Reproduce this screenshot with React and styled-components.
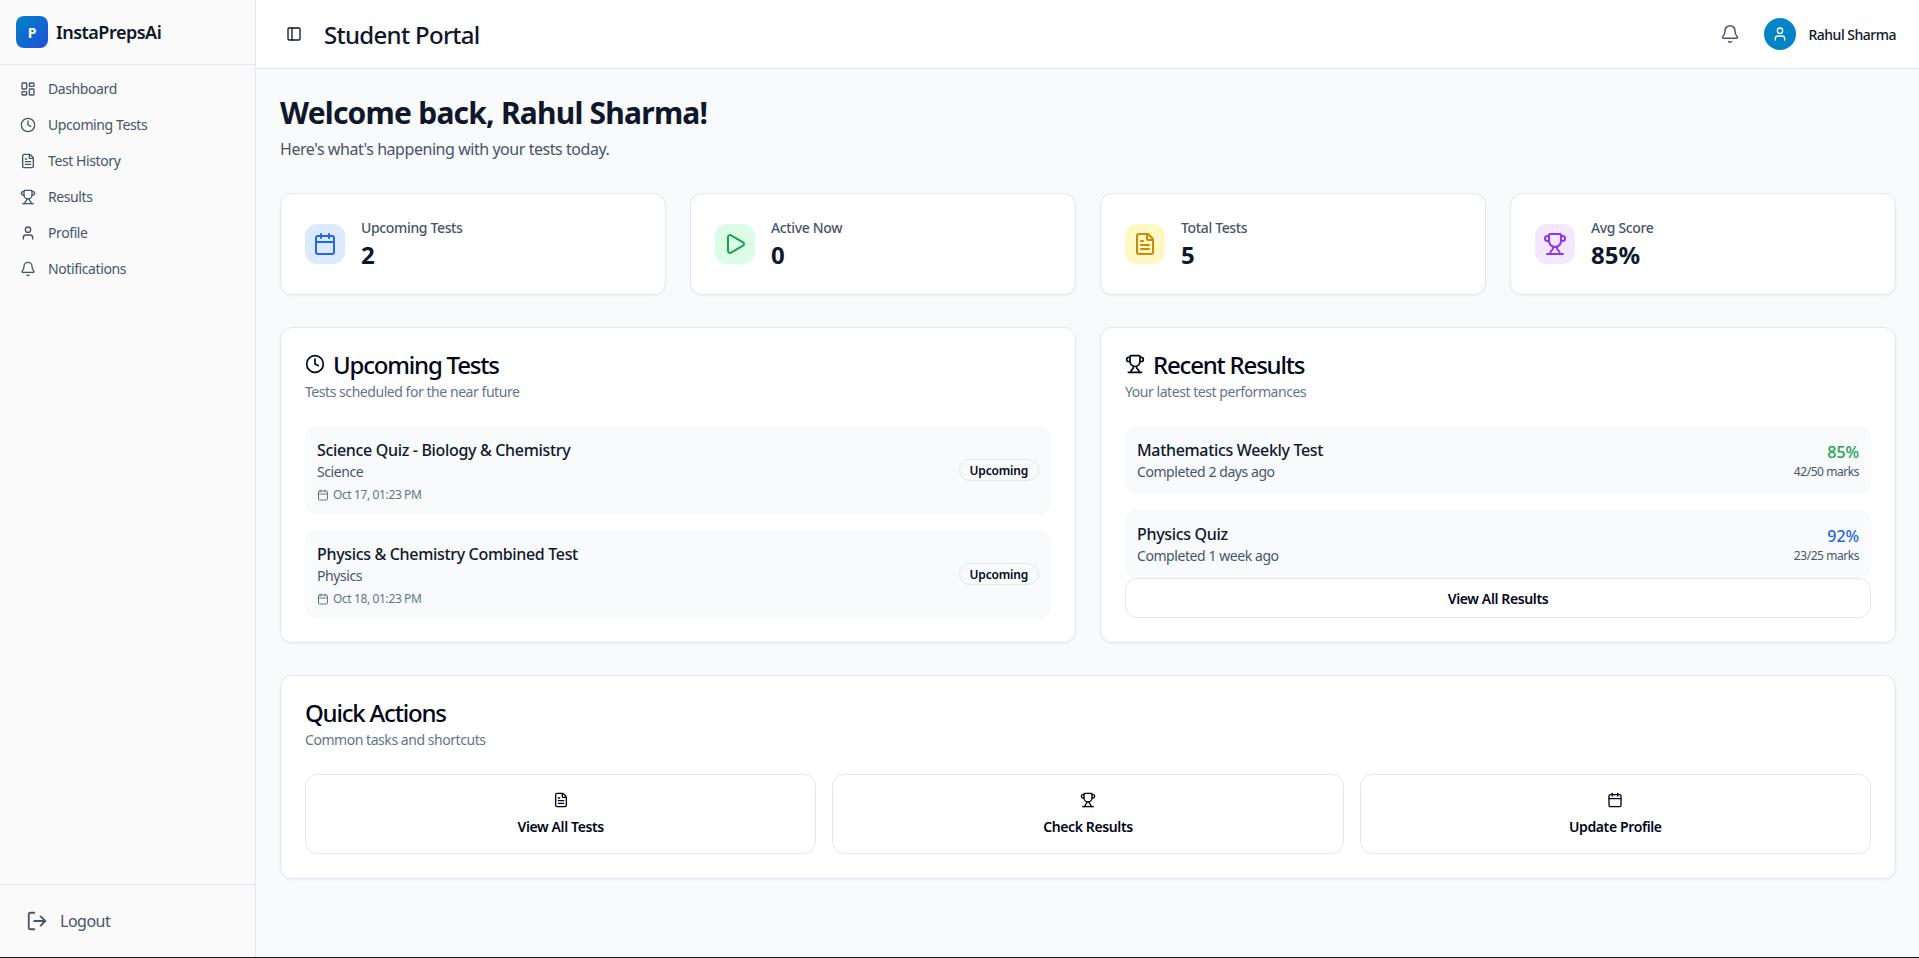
import { createGlobalStyle } from "styled-components";
import styled from "styled-components";
import {
  Bell,
  Calendar,
  Clock,
  FileText,
  LayoutDashboard,
  LogOut,
  PanelLeft,
  Play,
  Trophy,
  User,
} from "lucide-react";

const GlobalStyle = createGlobalStyle`
  html, body {
    margin: 0;
    padding: 0;
    height: 958px;
    overflow: hidden;
    background: #1a1a1a;
  }
  * {
    box-sizing: border-box;
  }
  body {
    font-family: "Noto Sans", Inter, sans-serif;
    color: #0f172a;
  }
`;

const navItems = [
  { label: "Dashboard", icon: LayoutDashboard },
  { label: "Upcoming Tests", icon: Clock },
  { label: "Test History", icon: FileText },
  { label: "Results", icon: Trophy },
  { label: "Profile", icon: User },
  { label: "Notifications", icon: Bell },
];

const stats = [
  { label: "Upcoming Tests", value: "2", icon: Calendar, bg: "#dbeafe", fg: "#2563eb" },
  { label: "Active Now", value: "0", icon: Play, bg: "#dcfce7", fg: "#16a34a" },
  { label: "Total Tests", value: "5", icon: FileText, bg: "#fef9c3", fg: "#ca8a04" },
  { label: "Avg Score", value: "85%", icon: Trophy, bg: "#f3e8ff", fg: "#9333ea" },
];

const upcoming = [
  { title: "Science Quiz - Biology & Chemistry", subject: "Science", date: "Oct 17, 01:23 PM" },
  { title: "Physics & Chemistry Combined Test", subject: "Physics", date: "Oct 18, 01:23 PM" },
];

const results = [
  { title: "Mathematics Weekly Test", when: "Completed 2 days ago", score: "85%", marks: "42/50 marks", color: "#16a34a" },
  { title: "Physics Quiz", when: "Completed 1 week ago", score: "92%", marks: "23/25 marks", color: "#2563eb" },
];

const actions = [
  { label: "View All Tests", icon: FileText },
  { label: "Check Results", icon: Trophy },
  { label: "Update Profile", icon: Calendar },
];

export default function App() {
  return (
    <>
      <GlobalStyle />
      <Shell>
        <Sidebar>
          <Brand>
            <LogoMark>P</LogoMark>
            <BrandName>InstaPrepsAi</BrandName>
          </Brand>
          <Nav>
            {navItems.map((item) => (
              <NavItem key={item.label}>
                <item.icon size={16} strokeWidth={2} />
                <NavLabel>{item.label}</NavLabel>
              </NavItem>
            ))}
          </Nav>
          <SidebarFooter>
            <LogoutButton>
              <LogOut size={22} strokeWidth={2} />
              Logout
            </LogoutButton>
          </SidebarFooter>
        </Sidebar>

        <Column>
          <TopBar>
            <TopLeft>
              <IconButton>
                <PanelLeft size={16} strokeWidth={2} />
              </IconButton>
              <PageTitle>Student Portal</PageTitle>
            </TopLeft>
            <TopRight>
              <BellButton>
                <Bell size={20} strokeWidth={1.75} />
              </BellButton>
              <UserChip>
                <Avatar>
                  <User size={16} strokeWidth={2} />
                </Avatar>
                <UserName>Rahul Sharma</UserName>
              </UserChip>
            </TopRight>
          </TopBar>

          <Main>
            <Welcome>Welcome back, Rahul Sharma!</Welcome>
            <WelcomeSub>Here's what's happening with your tests today.</WelcomeSub>

            <StatGrid>
              {stats.map((s) => (
                <StatCard key={s.label}>
                  <StatIcon $bg={s.bg} $fg={s.fg}>
                    <s.icon size={24} strokeWidth={2} />
                  </StatIcon>
                  <div>
                    <StatLabel>{s.label}</StatLabel>
                    <StatValue>{s.value}</StatValue>
                  </div>
                </StatCard>
              ))}
            </StatGrid>

            <TwoCol>
              <Card>
                <CardTitle>
                  <Clock size={20} strokeWidth={2} />
                  Upcoming Tests
                </CardTitle>
                <CardSub>Tests scheduled for the near future</CardSub>
                <ItemList>
                  {upcoming.map((t) => (
                    <TestItem key={t.title}>
                      <div>
                        <ItemTitle>{t.title}</ItemTitle>
                        <ItemMeta>{t.subject}</ItemMeta>
                        <ItemDate>
                          <Calendar size={12} strokeWidth={2} />
                          {t.date}
                        </ItemDate>
                      </div>
                      <Badge>Upcoming</Badge>
                    </TestItem>
                  ))}
                </ItemList>
              </Card>

              <Card>
                <CardTitle>
                  <Trophy size={20} strokeWidth={2} />
                  Recent Results
                </CardTitle>
                <CardSub>Your latest test performances</CardSub>
                <ItemList>
                  {results.map((r) => (
                    <TestItem key={r.title}>
                      <div>
                        <ItemTitle>{r.title}</ItemTitle>
                        <ItemMeta>{r.when}</ItemMeta>
                      </div>
                      <ScoreBox>
                        <Score $color={r.color}>{r.score}</Score>
                        <Marks>{r.marks}</Marks>
                      </ScoreBox>
                    </TestItem>
                  ))}
                </ItemList>
                <OutlineButton>View All Results</OutlineButton>
              </Card>
            </TwoCol>

            <QuickCard>
              <CardTitle>Quick Actions</CardTitle>
              <CardSub>Common tasks and shortcuts</CardSub>
              <ActionGrid>
                {actions.map((a) => (
                  <ActionButton key={a.label}>
                    <a.icon size={16} strokeWidth={2} />
                    {a.label}
                  </ActionButton>
                ))}
              </ActionGrid>
            </QuickCard>
          </Main>
        </Column>
      </Shell>
    </>
  );
}

const Shell = styled.div`
  display: flex;
  width: 1920px;
  height: 957px;
  background: #f8fafc;
`;

const Sidebar = styled.aside`
  width: 256px;
  flex-shrink: 0;
  display: flex;
  flex-direction: column;
  background: #fafafa;
  border-right: 1px solid #e2e8f0;
`;

const Brand = styled.div`
  height: 65px;
  padding: 16px;
  display: flex;
  align-items: flex-start;
  gap: 8px;
  border-bottom: 1px solid #e2e8f0;
`;

const LogoMark = styled.div`
  width: 32px;
  height: 32px;
  border-radius: 8px;
  background: linear-gradient(135deg, #0284c7, #1d4ed8);
  color: #fff;
  font-size: 14px;
  font-weight: 700;
  display: flex;
  align-items: center;
  justify-content: center;
`;

const BrandName = styled.div`
  font-size: 18px;
  font-weight: 600;
  line-height: 32px;
  letter-spacing: -0.5px;
  color: #0f172a;
`;

const Nav = styled.nav`
  flex: 1;
  padding: 8px;
  display: flex;
  flex-direction: column;
  gap: 4px;
`;

const NavItem = styled.a`
  height: 32px;
  padding: 0 12px;
  display: flex;
  align-items: center;
  gap: 12px;
  font-size: 14px;
  letter-spacing: -0.4px;
  color: #475569;

  svg {
    flex-shrink: 0;
  }
`;

const NavLabel = styled.span`
  padding-bottom: 2px;
`;

const SidebarFooter = styled.div`
  height: 73px;
  padding: 16px;
  border-top: 1px solid #e2e8f0;
`;

const LogoutButton = styled.button`
  width: 100%;
  height: 40px;
  padding: 0 10px;
  border: 0;
  background: none;
  display: flex;
  align-items: center;
  gap: 12px;
  font-family: inherit;
  font-size: 16px;
  letter-spacing: -0.5px;
  color: #475569;
`;

const Column = styled.div`
  flex: 1;
  min-width: 0;
  display: flex;
  flex-direction: column;
`;

const TopBar = styled.header`
  height: 69px;
  flex-shrink: 0;
  padding: 0 24px;
  display: flex;
  align-items: center;
  justify-content: space-between;
  background: #fff;
  border-bottom: 1px solid #e2e8f0;
`;

const TopLeft = styled.div`
  display: flex;
  align-items: center;
  gap: 16px;
`;

const IconButton = styled.button`
  width: 28px;
  height: 28px;
  padding: 0;
  border: 0;
  background: none;
  color: #0f172a;
  display: flex;
  align-items: center;
  justify-content: center;
`;

const PageTitle = styled.h1`
  margin: 0;
  padding-top: 2px;
  font-size: 24px;
  font-weight: 500;
  line-height: 32px;
  letter-spacing: -0.7px;
  color: #0f172a;
`;

const TopRight = styled.div`
  display: flex;
  align-items: center;
  gap: 24px;
`;

const BellButton = styled.div`
  display: flex;
  color: #475569;
`;

const UserChip = styled.div`
  display: flex;
  align-items: center;
  gap: 12px;
`;

const Avatar = styled.div`
  width: 32px;
  height: 32px;
  border-radius: 50%;
  background: #0284c7;
  color: #fff;
  display: flex;
  align-items: center;
  justify-content: center;
`;

const UserName = styled.span`
  font-size: 14px;
  font-weight: 500;
  letter-spacing: -0.5px;
  color: #0f172a;
`;

const Main = styled.main`
  flex: 1;
  padding: 24px;
  min-height: 0;
`;

const Welcome = styled.h2`
  margin: 0 0 6px;
  padding-top: 2px;
  font-size: 30px;
  font-weight: 700;
  line-height: 36px;
  letter-spacing: -0.78px;
  color: #0f172a;
`;

const WelcomeSub = styled.p`
  margin: 0;
  font-size: 16px;
  line-height: 24px;
  letter-spacing: -0.45px;
  color: #475569;
`;

const StatGrid = styled.section`
  margin-top: 32px;
  display: grid;
  grid-template-columns: repeat(4, 1fr);
  gap: 24px;
`;

const Card = styled.section`
  padding: 24px;
  background: #fff;
  border: 1px solid #e2e8f0;
  border-radius: 12px;
  box-shadow: 0 1px 2px rgba(15, 23, 42, 0.05);
`;

const StatCard = styled(Card)`
  display: flex;
  align-items: center;
  gap: 16px;
`;

const StatIcon = styled.div`
  width: 40px;
  height: 40px;
  border-radius: 12px;
  background: ${(p) => p.$bg};
  color: ${(p) => p.$fg};
  display: flex;
  align-items: center;
  justify-content: center;
`;

const StatLabel = styled.div`
  font-size: 14px;
  font-weight: 500;
  line-height: 20px;
  letter-spacing: -0.35px;
  color: #475569;
`;

const StatValue = styled.div`
  height: 32px;
  padding-top: 1px;
  font-size: 24px;
  font-weight: 700;
  line-height: 32px;
  color: #0f172a;
`;

const TwoCol = styled.div`
  margin-top: 32px;
  display: grid;
  grid-template-columns: 1fr 1fr;
  gap: 24px;
`;

const CardTitle = styled.h3`
  margin: 0;
  height: 24px;
  padding-top: 2px;
  display: flex;
  align-items: center;
  gap: 8px;
  font-size: 24px;
  font-weight: 500;
  line-height: 24px;
  letter-spacing: -1.2px;
  color: #020617;

  svg {
    margin-top: -2px;
  }
`;

const CardSub = styled.p`
  margin: 6px 0 24px;
  font-size: 14px;
  line-height: 20px;
  letter-spacing: -0.45px;
  color: #64748b;
`;

const ItemList = styled.div`
  display: flex;
  flex-direction: column;
  gap: 16px;
`;

const TestItem = styled.div`
  padding: 12px;
  display: flex;
  align-items: center;
  justify-content: space-between;
  background: #f8fafc;
  border-radius: 12px;
`;

const ItemTitle = styled.div`
  font-size: 16px;
  font-weight: 500;
  line-height: 24px;
  letter-spacing: -0.33px;
  color: #0f172a;
`;

const ItemMeta = styled.div`
  font-size: 14px;
  line-height: 20px;
  letter-spacing: -0.43px;
  color: #475569;
`;

const ItemDate = styled.div`
  margin-top: 4px;
  height: 16px;
  padding-top: 2px;
  display: flex;
  align-items: center;
  gap: 4px;
  font-size: 12px;
  line-height: 16px;
  letter-spacing: -0.38px;
  color: #64748b;
`;

const Badge = styled.span`
  height: 22px;
  padding: 0 10px;
  display: inline-flex;
  align-items: center;
  border: 1px solid #e2e8f0;
  border-radius: 999px;
  font-size: 12px;
  font-weight: 600;
  letter-spacing: -0.2px;
  color: #020617;
`;

const ScoreBox = styled.div`
  text-align: right;
`;

const Score = styled.div`
  font-size: 16px;
  font-weight: 500;
  line-height: 24px;
  letter-spacing: -0.1px;
  color: ${(p) => p.$color};
`;

const Marks = styled.div`
  font-size: 12px;
  line-height: 16px;
  letter-spacing: -0.45px;
  color: #475569;
`;

const OutlineButton = styled.button`
  display: block;
  width: 100%;
  height: 40px;
  background: #fff;
  border: 1px solid #e2e8f0;
  border-radius: 12px;
  font-family: inherit;
  font-size: 14px;
  font-weight: 600;
  letter-spacing: -0.38px;
  color: #020617;
`;

const QuickCard = styled(Card)`
  margin-top: 32px;
`;

const ActionGrid = styled.div`
  display: grid;
  grid-template-columns: repeat(3, 1fr);
  gap: 16px;
`;

const ActionButton = styled.button`
  height: 80px;
  padding: 0 0 1px;
  background: #fff;
  border: 1px solid #e2e8f0;
  border-radius: 12px;
  display: flex;
  flex-direction: column;
  align-items: center;
  justify-content: center;
  gap: 9px;
  font-family: inherit;
  font-size: 14px;
  font-weight: 600;
  letter-spacing: -0.38px;
  color: #020617;
`;
